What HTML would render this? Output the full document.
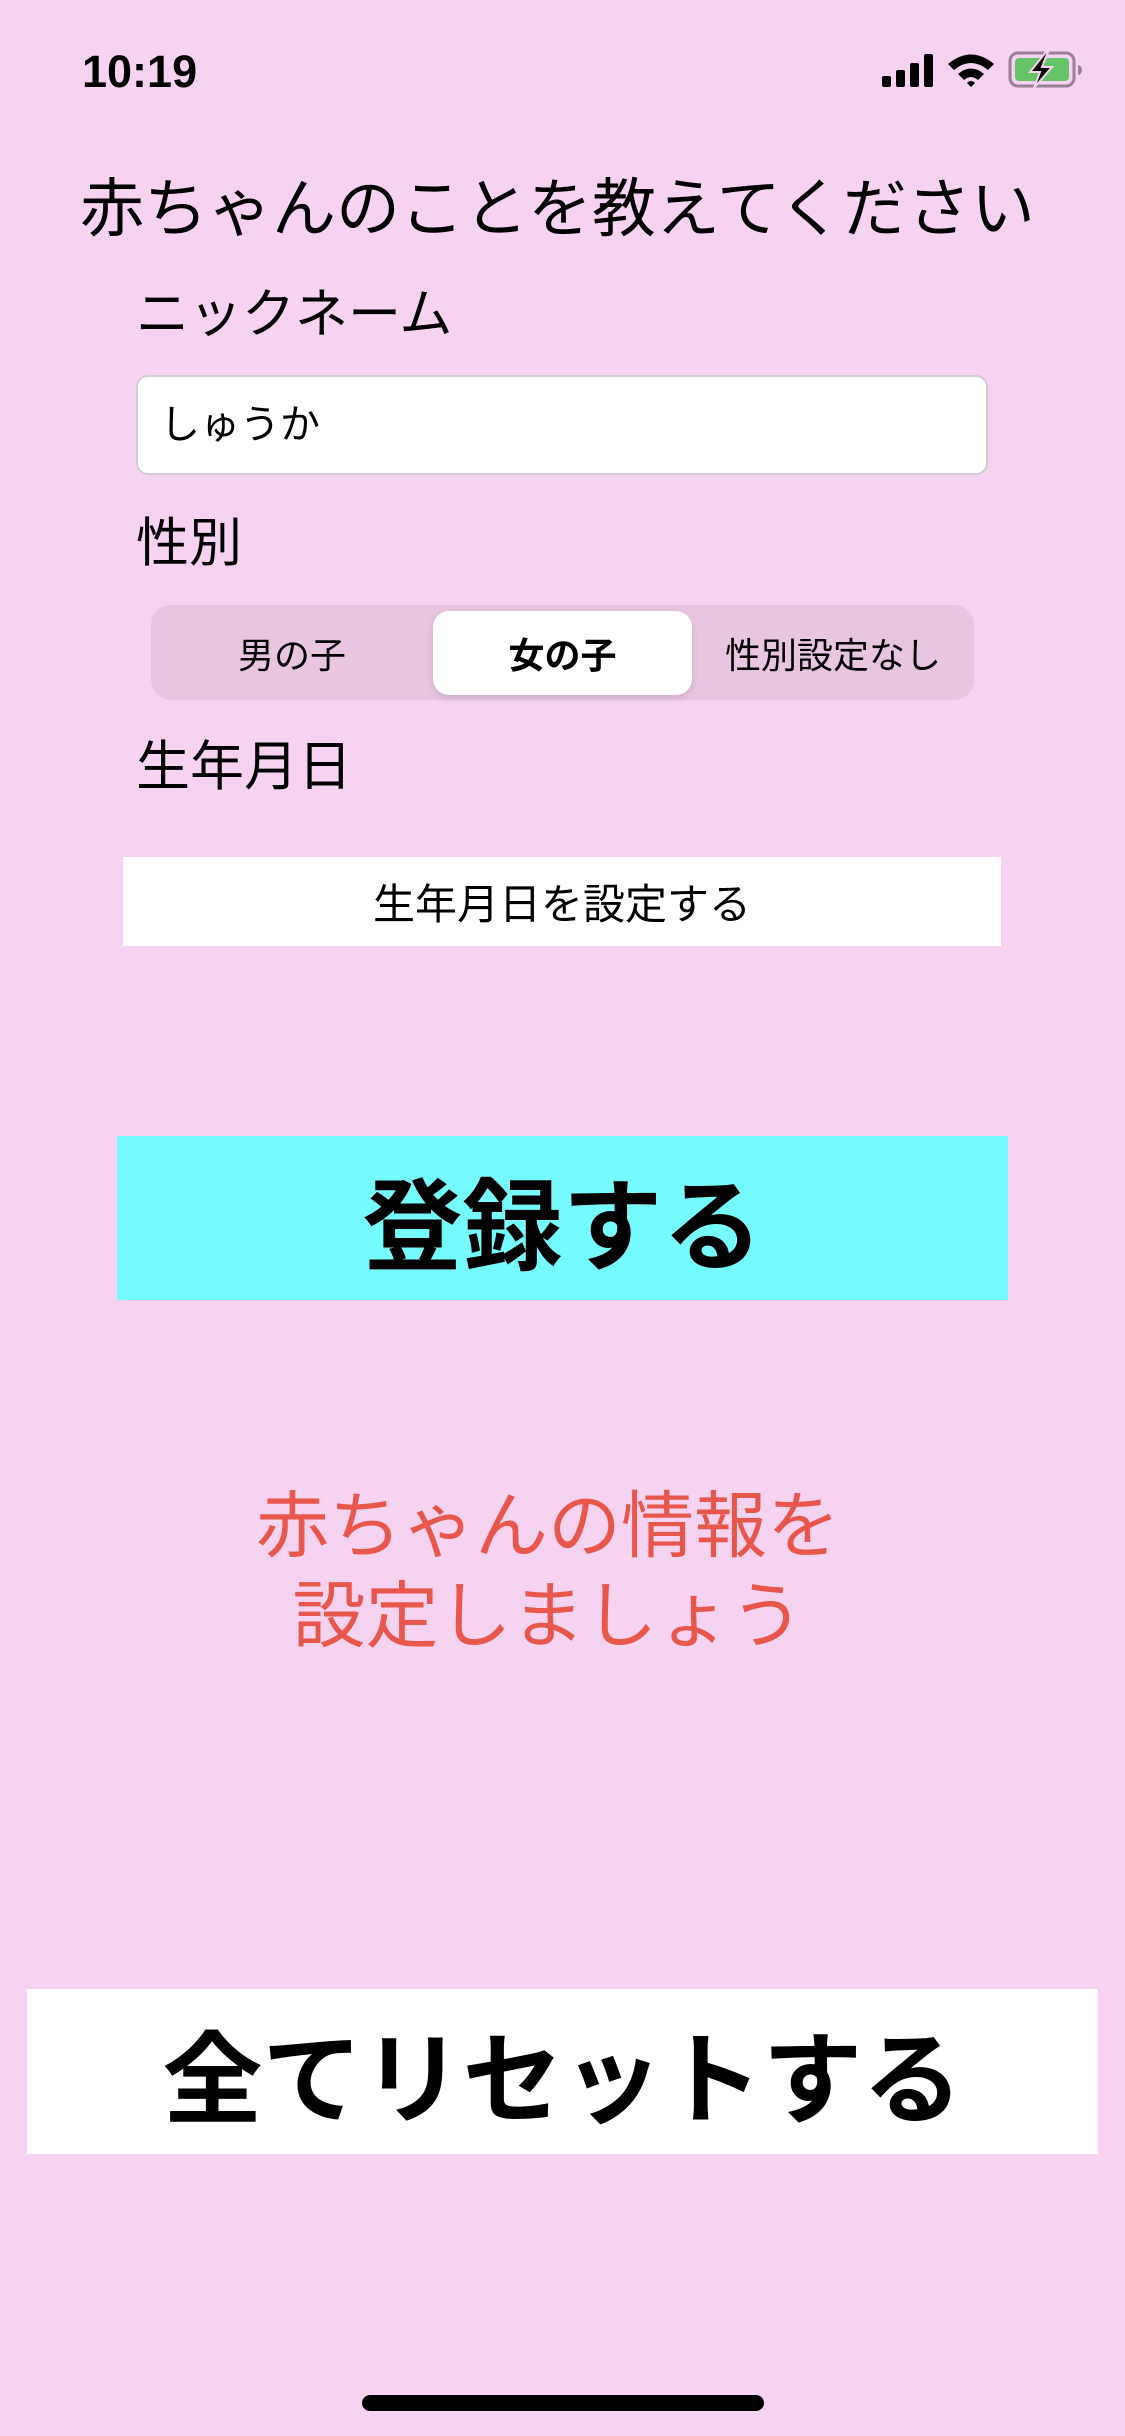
<!DOCTYPE html>
<html><head><meta charset="utf-8"><style>
*{margin:0;padding:0;box-sizing:border-box}
body{width:1125px;height:2436px;background:#f6d3f1;position:relative;overflow:hidden;font-family:"Liberation Sans","Noto Sans CJK JP",sans-serif;color:#000}
.a{position:absolute;line-height:1;white-space:nowrap}
.box{position:absolute;display:flex;align-items:center;justify-content:center}
</style></head><body>
<div class="a" style="left:82px;top:49px;font-size:45px;font-weight:bold;letter-spacing:0px">10:19</div>
<svg class="a" style="left:880px;top:50px" width="205" height="40" viewBox="0 0 205 40">
<rect x="2" y="26" width="9" height="11" rx="2"/><rect x="16" y="20" width="9" height="17" rx="2"/><rect x="30" y="13" width="9" height="24" rx="2"/><rect x="44" y="4" width="9" height="33" rx="2"/>
<path d="M68 14 Q91 -5 114 14 L108 20 Q91 6 74 20 Z"/><path d="M78 24 Q91 13 104 24 L98 30 Q91 24 84 30 Z"/><path d="M87 33 L91 37 L95 33 Q91 29 87 33 Z"/>
<rect x="130" y="3" width="64" height="33" rx="8" fill="none" stroke="#9a7f97" stroke-width="3"/>
<rect x="135" y="8" width="54" height="23" rx="4" fill="#64c466"/>
<path d="M198 15 v10 q4 -1 4 -5 q0 -4 -4 -5z" fill="#9a7f97"/>
<path d="M166 2 L150 22 L160 22 L154 38 L172 17 L162 17 L168 2 Z" stroke="#f6d3f1" stroke-width="2"/>
</svg>
<div class="a" style="left:80px;top:177px;font-size:64px">赤ちゃんのことを教えてください</div>
<div class="a" style="left:136px;top:288px;font-size:53px">ニックネーム</div>
<div class="a" style="left:136px;top:375px;width:852px;height:100px;background:#fff;border:2px solid #d2cdd1;border-radius:12px;display:flex;align-items:center;padding-left:22px;font-size:40px">しゅうか</div>
<div class="a" style="left:136px;top:517px;font-size:53px">性別</div>
<div class="a" style="left:151px;top:605px;width:823px;height:95px;background:#e8c6e0;border-radius:20px"></div>
<div class="a" style="left:433px;top:611px;width:259px;height:84px;background:#fff;border-radius:16px;box-shadow:0 3px 8px rgba(0,0,0,.12)"></div>
<div class="box" style="left:151px;top:605px;width:282px;height:95px;font-size:36px">男の子</div>
<div class="box" style="left:433px;top:611px;width:259px;height:84px;font-size:36px;font-weight:bold">女の子</div>
<div class="box" style="left:692px;top:605px;width:282px;height:95px;font-size:36px">性別設定なし</div>
<div class="a" style="left:136px;top:740px;font-size:54px">生年月日</div>
<div class="box" style="left:123px;top:857px;width:878px;height:89px;background:#fff;font-size:42px">生年月日を設定する</div>
<div class="box" style="left:117px;top:1136px;width:891px;height:164px;background:#75fbfd;font-size:100px;font-weight:bold">登録する</div>
<div class="a" style="left:0;width:1096px;top:1482px;text-align:center;font-size:73px;line-height:90px;color:#e8574c">赤ちゃんの情報を<br>設定しましょう</div>
<div class="box" style="left:27px;top:1989px;width:1071px;height:165px;background:#fff;font-size:100px;font-weight:bold">全てリセットする</div>
<div class="a" style="left:362px;top:2395px;width:402px;height:16px;background:#000;border-radius:8px"></div>
</body></html>
